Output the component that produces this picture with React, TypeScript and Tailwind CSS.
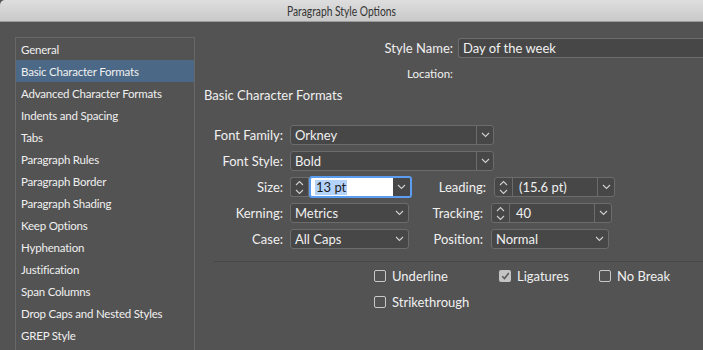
import React from "react"

const sections = [
  "General",
  "Basic Character Formats",
  "Advanced Character Formats",
  "Indents and Spacing",
  "Tabs",
  "Paragraph Rules",
  "Paragraph Border",
  "Paragraph Shading",
  "Keep Options",
  "Hyphenation",
  "Justification",
  "Span Columns",
  "Drop Caps and Nested Styles",
  "GREP Style",
]

function Chevron() {
  return (
    <svg width="9" height="6" viewBox="0 0 9 6" fill="none">
      <path d="M1 1 L4.5 4.5 L8 1" stroke="#d0d0d0" strokeWidth="1.1" />
    </svg>
  )
}

function Spinner() {
  return (
    <div className="w-[18px] h-full flex items-center justify-center border-r border-[#6c6c6c]">
      <svg width="9" height="15" viewBox="0 0 9 15" fill="none">
        <path d="M1 5 L4.5 1.5 L8 5" stroke="#d0d0d0" strokeWidth="1.1" />
        <path d="M1 10 L4.5 13.5 L8 10" stroke="#d0d0d0" strokeWidth="1.1" />
      </svg>
    </div>
  )
}

function Combo({ value, width }: { value: string; width: string }) {
  return (
    <div className={`${width} h-full flex items-center rounded-[3px] border border-[#6c6c6c] bg-[#474747]`}>
      <span className="flex-1 pl-[4px] pt-[2px]">{value}</span>
      <div className="w-[17px] h-full flex items-center justify-center border-l border-[#6c6c6c]">
        <Chevron />
      </div>
    </div>
  )
}

function Popup({ value, width }: { value: string; width: string }) {
  return (
    <div className={`${width} h-full flex items-center rounded-[3px] border border-[#6c6c6c] bg-[#474747]`}>
      <span className="flex-1 pl-[4px] pt-[2px]">{value}</span>
      <div className="w-[17px] flex items-center justify-center">
        <Chevron />
      </div>
    </div>
  )
}

function SpinCombo({ value, width }: { value: string; width: string }) {
  return (
    <div className={`${width} h-full flex items-center rounded-[3px] border border-[#6c6c6c] bg-[#474747]`}>
      <Spinner />
      <span className="flex-1 pl-[6px] pt-[2px]">{value}</span>
      <div className="w-[17px] h-full flex items-center justify-center border-l border-[#6c6c6c]">
        <Chevron />
      </div>
    </div>
  )
}

function Check({ label, checked }: { label: string; checked?: boolean }) {
  return (
    <div className="flex items-center gap-[6px]">
      {checked ? (
        <div className="w-[12px] h-[12px] rounded-[2px] bg-[#c4c4c4] flex items-center justify-center">
          <svg width="9" height="8" viewBox="0 0 9 8" fill="none">
            <path d="M1.2 4.2 L3.5 6.5 L7.8 1" stroke="#5a5a5a" strokeWidth="1.5" />
          </svg>
        </div>
      ) : (
        <div className="w-[12px] h-[12px] rounded-[2px] border border-[#c8c8c8]" />
      )}
      <span className="pt-[1px]">{label}</span>
    </div>
  )
}

export default function App() {
  return (
    <div className="w-[703px] h-[350px] overflow-hidden bg-[#535353] font-['Lato',sans-serif] text-[#f0f0f0] flex flex-col">
      <div className="h-[22px] shrink-0 flex items-center pl-[287px] bg-gradient-to-b from-[#dedede] to-[#c9c9c9] border-b border-[#9b9b9b] rounded-tl-[5px]">
        <span className="inline-block origin-left scale-x-[0.76] text-[13.5px] text-[#333333] pt-[1px]">
          Paragraph Style Options
        </span>
      </div>

      <div className="flex flex-1">
        <div className="ml-[15px] mt-[15px] w-[180px] shrink-0 border border-b-0 border-[#676767]">
          {sections.map((s, i) => (
            <div
              key={s}
              className={`h-[22px] flex items-center pl-[5px] pt-[1px] text-[11.5px] tracking-[-0.2px] ${i === 1 ? "bg-[#4b6886]" : ""}`}
            >
              {s}
            </div>
          ))}
        </div>

        <div className="flex-1 flex flex-col text-[13px]">
          <div className="mt-[16px] h-[20px] flex items-center">
            <span className="w-[258px] text-right pt-[2px]">Style Name:</span>
            <div className="ml-[5px] w-[300px] h-full rounded-l-[3px] border border-r-0 border-[#6c6c6c] bg-[#474747] flex items-center pl-[4px] pt-[2px]">
              Day of the week
            </div>
          </div>
          <div className="mt-[8px] h-[14px] flex items-center">
            <span className="w-[258px] text-right text-[11.5px] pt-[1px]">Location:</span>
          </div>
          <div className="mt-[8px] h-[14px] flex items-center pl-[9px] pt-[1px]">
            Basic Character Formats
          </div>

          <div className="mt-[23px] flex flex-col gap-[6px]">
            <div className="h-[20px] flex items-center">
              <span className="w-[88px] text-right pt-[2px]">Font Family:</span>
              <div className="ml-[7px] h-full flex">
                <Combo value="Orkney" width="w-[204px]" />
              </div>
            </div>
            <div className="h-[20px] flex items-center">
              <span className="w-[88px] text-right pt-[2px]">Font Style:</span>
              <div className="ml-[7px] h-full flex">
                <Combo value="Bold" width="w-[204px]" />
              </div>
            </div>
            <div className="h-[20px] flex items-center">
              <span className="w-[88px] text-right pt-[2px]">Size:</span>
              <div className="ml-[7px] w-[122px] h-full flex">
                <div className="h-full flex rounded-l-[3px] border border-r-0 border-[#6c6c6c] bg-[#474747]">
                  <Spinner />
                </div>
                <div className="flex-1 h-[22px] -mt-[1px] flex rounded-[3px] border-2 border-[#5b9df0] overflow-hidden">
                  <div className="flex-1 bg-white flex items-center pl-[4px] pt-[1px]">
                    <span className="bg-[#b3d3fb] text-[#1c1c1c] leading-[15px] px-[1px]">13 pt</span>
                  </div>
                  <div className="w-[17px] bg-[#474747] flex items-center justify-center">
                    <Chevron />
                  </div>
                </div>
              </div>
              <span className="w-[74px] text-right pt-[2px]">Leading:</span>
              <div className="ml-[8px] h-full flex">
                <SpinCombo value="(15.6 pt)" width="w-[121px]" />
              </div>
            </div>
            <div className="h-[20px] flex items-center">
              <span className="w-[88px] text-right pt-[2px]">Kerning:</span>
              <div className="ml-[7px] h-full flex">
                <Popup value="Metrics" width="w-[119px]" />
              </div>
              <span className="w-[74px] text-right pt-[2px]">Tracking:</span>
              <div className="ml-[8px] h-full flex">
                <SpinCombo value="40" width="w-[121px]" />
              </div>
            </div>
            <div className="h-[20px] flex items-center">
              <span className="w-[88px] text-right pt-[2px]">Case:</span>
              <div className="ml-[7px] h-full flex">
                <Popup value="All Caps" width="w-[119px]" />
              </div>
              <span className="w-[74px] text-right pt-[2px]">Position:</span>
              <div className="ml-[8px] h-full flex">
                <Popup value="Normal" width="w-[118px]" />
              </div>
            </div>
          </div>

          <div className="mt-[12px] ml-[19px] h-px bg-[#484848]" />

          <div className="mt-[6px] ml-[179px] flex flex-col gap-[10px]">
            <div className="h-[16px] flex items-center">
              <div className="w-[125px]">
                <Check label="Underline" />
              </div>
              <div className="w-[100px]">
                <Check label="Ligatures" checked />
              </div>
              <Check label="No Break" />
            </div>
            <div className="h-[16px] flex items-center">
              <Check label="Strikethrough" />
            </div>
          </div>
        </div>
      </div>
    </div>
  )
}
